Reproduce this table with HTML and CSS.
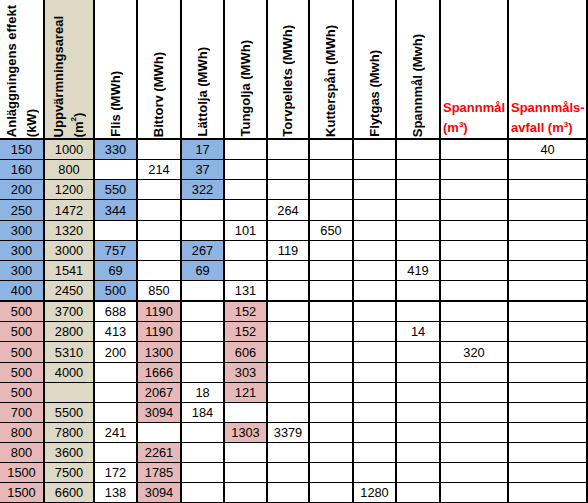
FILE: index.html
```html
<!DOCTYPE html>
<html lang="sv">
<head>
<meta charset="utf-8">
<title>Anläggningar</title>
<link rel="stylesheet" href="styles.css">
</head>
<body>
<table class="sheet">
  <colgroup>
    <col class="w44"><col class="w50"><col class="w43"><col class="w44"><col class="w43"><col class="w43">
    <col class="w42"><col class="w44"><col class="w43"><col class="w44"><col class="w68"><col class="w79">
  </colgroup>
  <thead>
    <tr>
      <th><span class="vt">Anläggningens effekt<br>(kW)</span></th>
      <th class="t"><span class="vt">Uppvärmningsareal<br>(m<sup>2</sup>)</span></th>
      <th><span class="vt">Flis (MWh)</span></th>
      <th><span class="vt">Bittorv (MWh)</span></th>
      <th><span class="vt">Lättolja (MWh)</span></th>
      <th><span class="vt">Tungolja (MWh)</span></th>
      <th><span class="vt">Torvpellets (MWh)</span></th>
      <th><span class="vt">Kutterspån (MWh)</span></th>
      <th><span class="vt">Flytgas (Mwh)</span></th>
      <th><span class="vt">Spannmål (Mwh)</span></th>
      <th class="red">Spannmål<br>(m<sup>3</sup>)</th>
      <th class="red">Spannmåls-<br>avfall (m<sup>3</sup>)</th>
    </tr>
  </thead>
  <tbody>
    <tr><td class="b">150</td><td class="t">1000</td><td class="b">330</td><td></td><td class="b">17</td><td></td><td></td><td></td><td></td><td></td><td></td><td>40</td></tr>
    <tr><td class="b">160</td><td class="t">800</td><td></td><td>214</td><td class="b">37</td><td></td><td></td><td></td><td></td><td></td><td></td><td></td></tr>
    <tr><td class="b">200</td><td class="t">1200</td><td class="b">550</td><td></td><td class="b">322</td><td></td><td></td><td></td><td></td><td></td><td></td><td></td></tr>
    <tr class="tall"><td class="b">250</td><td class="t">1472</td><td class="b">344</td><td></td><td></td><td></td><td>264</td><td></td><td></td><td></td><td></td><td></td></tr>
    <tr><td class="b">300</td><td class="t">1320</td><td></td><td></td><td></td><td>101</td><td></td><td>650</td><td></td><td></td><td></td><td></td></tr>
    <tr><td class="b">300</td><td class="t">3000</td><td class="b">757</td><td></td><td class="b">267</td><td></td><td>119</td><td></td><td></td><td></td><td></td><td></td></tr>
    <tr><td class="b">300</td><td class="t">1541</td><td class="b">69</td><td></td><td class="b">69</td><td></td><td></td><td></td><td></td><td>419</td><td></td><td></td></tr>
    <tr class="split"><td class="b">400</td><td class="t">2450</td><td class="b">500</td><td>850</td><td></td><td>131</td><td></td><td></td><td></td><td></td><td></td><td></td></tr>
    <tr><td class="p">500</td><td class="t">3700</td><td>688</td><td class="p">1190</td><td></td><td class="p">152</td><td></td><td></td><td></td><td></td><td></td><td></td></tr>
    <tr><td class="p">500</td><td class="t">2800</td><td>413</td><td class="p">1190</td><td></td><td class="p">152</td><td></td><td></td><td></td><td>14</td><td></td><td></td></tr>
    <tr class="tall"><td class="p">500</td><td class="t">5310</td><td>200</td><td class="p">1300</td><td></td><td class="p">606</td><td></td><td></td><td></td><td></td><td>320</td><td></td></tr>
    <tr><td class="p">500</td><td class="t">4000</td><td></td><td class="p">1666</td><td></td><td class="p">303</td><td></td><td></td><td></td><td></td><td></td><td></td></tr>
    <tr><td class="p">500</td><td class="t"></td><td></td><td class="p">2067</td><td>18</td><td class="p">121</td><td></td><td></td><td></td><td></td><td></td><td></td></tr>
    <tr><td class="p">700</td><td class="t">5500</td><td></td><td class="p">3094</td><td>184</td><td></td><td></td><td></td><td></td><td></td><td></td><td></td></tr>
    <tr><td class="p">800</td><td class="t">7800</td><td>241</td><td></td><td></td><td class="p">1303</td><td>3379</td><td></td><td></td><td></td><td></td><td></td></tr>
    <tr><td class="p">800</td><td class="t">3600</td><td></td><td class="p">2261</td><td></td><td></td><td></td><td></td><td></td><td></td><td></td><td></td></tr>
    <tr><td class="p">1500</td><td class="t">7500</td><td>172</td><td class="p">1785</td><td></td><td></td><td></td><td></td><td></td><td></td><td></td><td></td></tr>
    <tr class="last"><td class="p">1500</td><td class="t">6600</td><td>138</td><td class="p">3094</td><td></td><td></td><td></td><td></td><td>1280</td><td></td><td></td><td></td></tr>
  </tbody>
</table>
</body>
</html>
```

FILE: styles.css
```css
html, body {
  margin: 0;
  padding: 0;
  background: #ffffff;
}

.sheet {
  border-collapse: collapse;
  table-layout: fixed;
  width: 588px;
  font-family: "Liberation Sans", Arial, sans-serif;
  font-size: 12.8px;
  color: #000;
}

.w42 { width: 42px; }
.w43 { width: 43px; }
.w44 { width: 44px; }
.w50 { width: 50px; }
.w68 { width: 68px; }
.w79 { width: 79px; }

.sheet th {
  height: 137px;
  padding: 0 0 1px 0;
  border-right: 2px solid #000;
  border-bottom: 2px solid #000;
  vertical-align: bottom;
  text-align: center;
  font-weight: bold;
  font-size: 0;
  line-height: 0;
}

.vt {
  display: inline-block;
  writing-mode: vertical-rl;
  transform: rotate(180deg);
  font-size: 13px;
  line-height: 20px;
  text-align: start;
  white-space: nowrap;
}

.vt sup,
.red sup {
  font-size: 8px;
  line-height: 0;
  vertical-align: 5px;
}

.sheet th.red {
  color: #ff0000;
  font-size: 13px;
  line-height: 20px;
  text-align: left;
  padding: 0 0 0 2px;
  white-space: nowrap;
}

.sheet td {
  height: 19px;
  padding: 0;
  border-right: 2px solid #000;
  border-bottom: 1px solid #000;
  text-align: center;
  vertical-align: middle;
  line-height: 19px;
}

.sheet tr.tall td {
  height: 20px;
}

.sheet tr.split td,
.sheet tr.last td {
  border-bottom: 2px solid #000;
}

.b { background: #8db4e2; }
.t { background: #ddd9c4; }
.p { background: #e6b8b7; }
```
